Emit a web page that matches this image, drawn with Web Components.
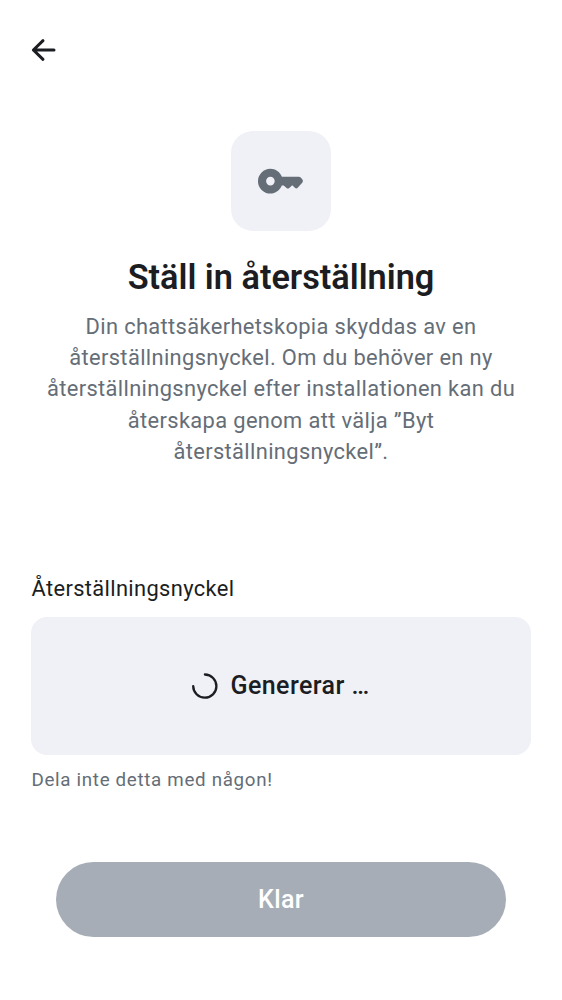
<!DOCTYPE html>
<html lang="sv">
<head>
<meta charset="utf-8">
<title>Ställ in återställning</title>
<style>
html,body{margin:0;background:#fff}
body{font-family:Roboto,sans-serif;color:#1b1d22}
</style>
</head>
<body>
<recovery-screen></recovery-screen>
<script>
const define = (name, html) => customElements.define(name, class extends HTMLElement {
  constructor() {
    super();
    this.attachShadow({ mode: "open" }).innerHTML = html;
  }
});

define("top-bar", `<style>
:host{display:flex;align-items:center;height:100px;padding-left:25px;box-sizing:border-box}
svg{display:block}
</style>
<svg width="38" height="38" viewBox="0 0 38 38" fill="none" stroke="#1b1d22" stroke-width="3" stroke-linecap="round" stroke-linejoin="round"><path d="M18 9.700 8.400 19l9.600 9.300M8.400 19H29"/></svg>`);

define("key-badge", `<style>
:host{display:block;width:100px;height:100px;border-radius:22px;background:#f0f1f6}
svg{display:block}
</style>
<svg width="100" height="100" viewBox="0 0 100 100"><path fill="#656d77" fill-rule="evenodd" d="M39.400 37.800c5 0 9.600 3.200 11.500 8h16.800c.8 0 1.500.3 2 .8l1.300 1.400c1.200 1.200 1.200 2.900 0 4.100l-4.300 4.700c-.9.9-1.900.9-2.800 0l-2.700-2.500-2.900 2.600c-.9.9-1.800.9-2.700 0l-2.900-2.400h-1.900c-1.900 4.700-6.400 8.100-11.400 8.100A12.400 12.400 0 1 1 39.400 37.800Zm0 8a4.300 4.300 0 1 0 0 8.600 4.300 4.300 0 0 0 0-8.600Z"/></svg>`);

define("page-intro", `<style>
:host{display:flex;flex-direction:column;align-items:center;margin-top:31px;text-align:center}
h1{margin:25px 0 0;font-size:34.3px;line-height:42px;font-weight:600}
p{margin:13px 0 0;font-size:21.86px;line-height:31.2px;letter-spacing:.36px;color:#656d77;white-space:nowrap}
</style>
<key-badge></key-badge><h1><slot name="title"></slot></h1><p><slot></slot></p>`);

define("loading-spinner", `<style>:host,svg{display:block}</style>
<svg width="28" height="28" viewBox="0 0 28 28" fill="none" stroke="#1b1d22" stroke-width="2.300" stroke-linecap="round"><path d="M14.900 2.500A11.600 11.600 0 1 1 3.200 14.100"/></svg>`);

define("recovery-field", `<style>
:host{display:block;margin:106.250px 31px 0}
label{display:block;font-size:21.86px;line-height:31px;letter-spacing:.36px;padding-left:.5px}
.box{display:flex;align-items:center;justify-content:center;gap:12px;height:138px;margin-top:13px;padding-right:2px;box-sizing:border-box;border-radius:16px;background:#f0f1f6;font-size:25px;font-weight:500;letter-spacing:.43px}
.box span{margin-top:-2px}
.help{font-size:18.75px;line-height:26px;letter-spacing:.68px;color:#656d77;margin-top:12px;padding-left:.5px}
</style>
<label><slot name="label"></slot></label>
<div class="box"><loading-spinner></loading-spinner><span><slot></slot></span></div>
<div class="help"><slot name="help"></slot></div>`);

define("primary-button", `<style>
:host{display:block;margin:69.100px 56px 0}
button{display:block;width:100%;height:75px;border:0;padding:0;border-radius:38px;background:#a6adb7;color:#fff;font:500 25px Roboto,sans-serif;letter-spacing:.4px}
</style>
<button disabled><slot></slot></button>`);

define("recovery-screen", `<style>:host{display:flow-root;width:562px;height:1000px;overflow:hidden;background:#fff}</style>
<top-bar></top-bar>
<page-intro><span slot="title">Ställ in återställning</span>Din chattsäkerhetskopia skyddas av en<br>återställningsnyckel. Om du behöver en ny<br>återställningsnyckel efter installationen kan du<br>återskapa genom att välja ”Byt<br>återställningsnyckel”.</page-intro>
<recovery-field><span slot="label">Återställningsnyckel</span>Genererar …<span slot="help">Dela inte detta med någon!</span></recovery-field>
<primary-button>Klar</primary-button>`);
</script>
</body>
</html>
